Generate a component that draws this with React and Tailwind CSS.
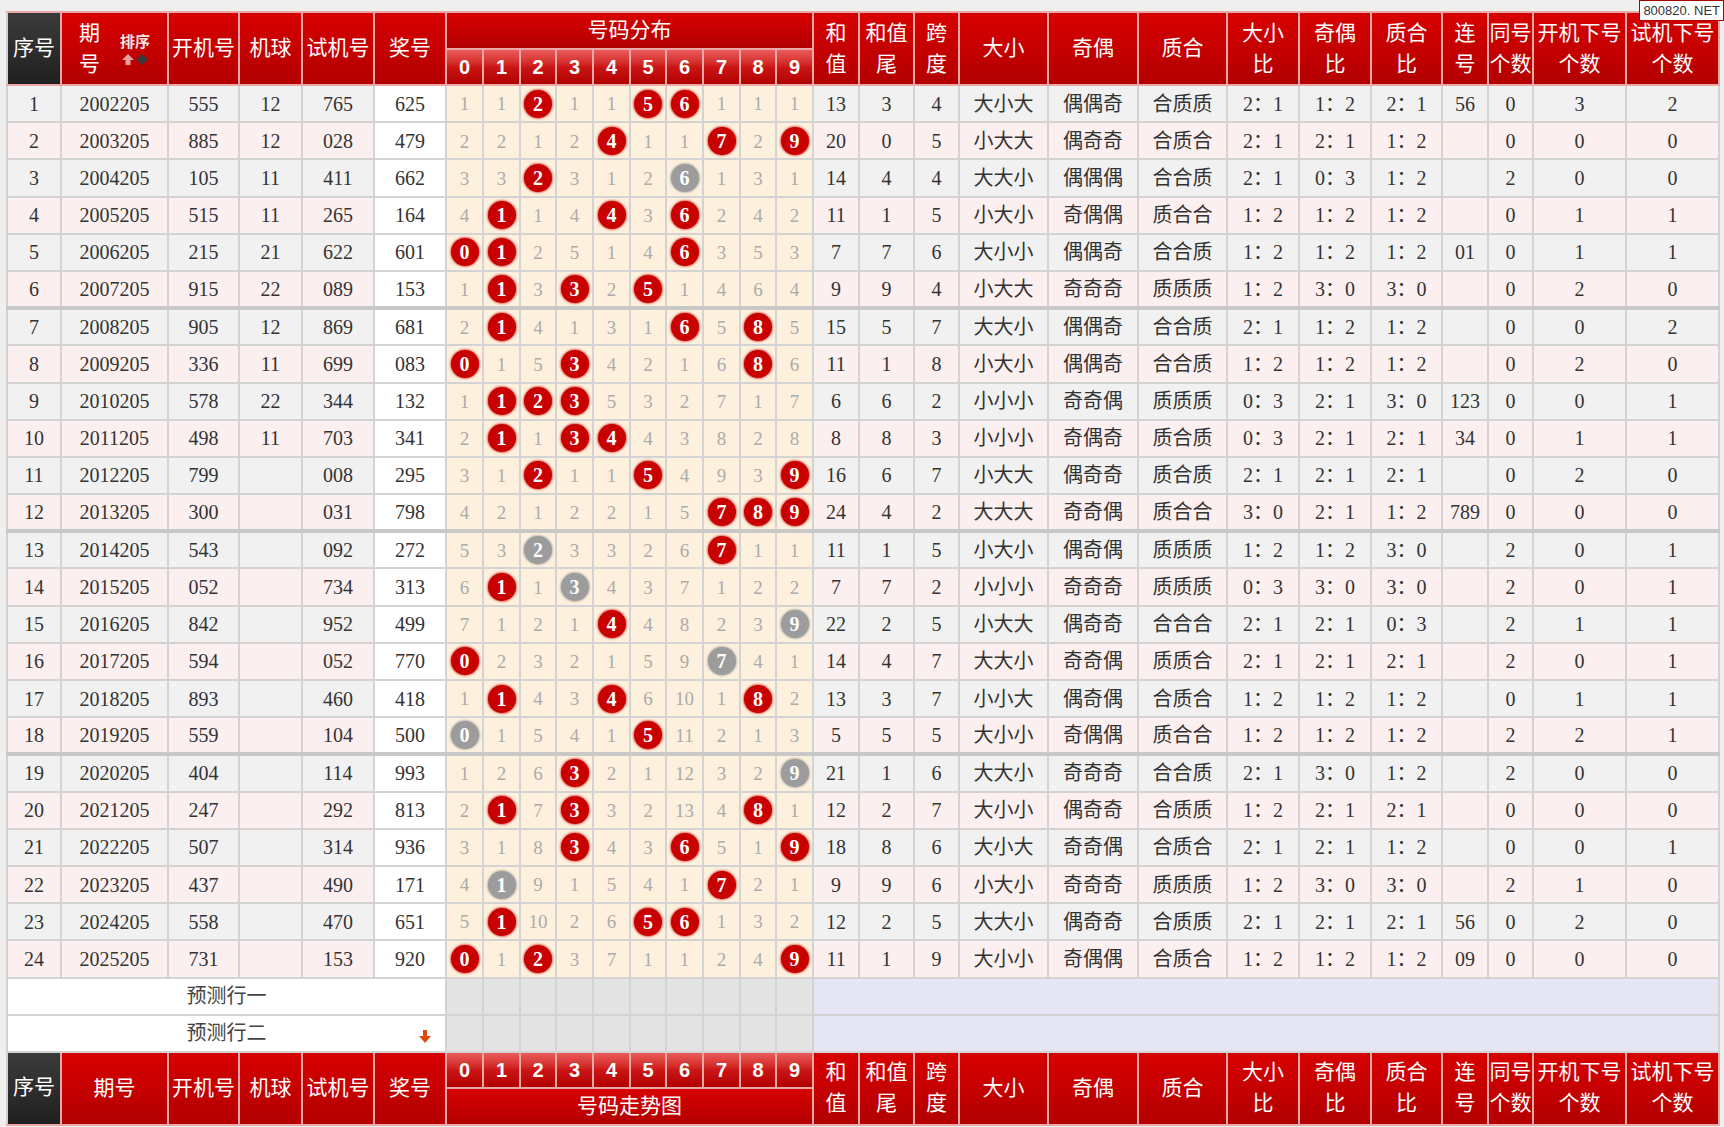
import React from 'react'

const rows = [
  [1, '2002205', '555', '12', '765', '625', '1 1 R 1 1 R R 1 1 1', ['13', '3', '4', '大小大', '偶偶奇', '合质质', '2：1', '1：2', '2：1', '56', '0', '3', '2']],
  [2, '2003205', '885', '12', '028', '479', '2 2 1 2 R 1 1 R 2 R', ['20', '0', '5', '小大大', '偶奇奇', '合质合', '2：1', '2：1', '1：2', '', '0', '0', '0']],
  [3, '2004205', '105', '11', '411', '662', '3 3 R 3 1 2 G 1 3 1', ['14', '4', '4', '大大小', '偶偶偶', '合合质', '2：1', '0：3', '1：2', '', '2', '0', '0']],
  [4, '2005205', '515', '11', '265', '164', '4 R 1 4 R 3 R 2 4 2', ['11', '1', '5', '小大小', '奇偶偶', '质合合', '1：2', '1：2', '1：2', '', '0', '1', '1']],
  [5, '2006205', '215', '21', '622', '601', 'R R 2 5 1 4 R 3 5 3', ['7', '7', '6', '大小小', '偶偶奇', '合合质', '1：2', '1：2', '1：2', '01', '0', '1', '1']],
  [6, '2007205', '915', '22', '089', '153', '1 R 3 R 2 R 1 4 6 4', ['9', '9', '4', '小大大', '奇奇奇', '质质质', '1：2', '3：0', '3：0', '', '0', '2', '0']],
  [7, '2008205', '905', '12', '869', '681', '2 R 4 1 3 1 R 5 R 5', ['15', '5', '7', '大大小', '偶偶奇', '合合质', '2：1', '1：2', '1：2', '', '0', '0', '2']],
  [8, '2009205', '336', '11', '699', '083', 'R 1 5 R 4 2 1 6 R 6', ['11', '1', '8', '小大小', '偶偶奇', '合合质', '1：2', '1：2', '1：2', '', '0', '2', '0']],
  [9, '2010205', '578', '22', '344', '132', '1 R R R 5 3 2 7 1 7', ['6', '6', '2', '小小小', '奇奇偶', '质质质', '0：3', '2：1', '3：0', '123', '0', '0', '1']],
  [10, '2011205', '498', '11', '703', '341', '2 R 1 R R 4 3 8 2 8', ['8', '8', '3', '小小小', '奇偶奇', '质合质', '0：3', '2：1', '2：1', '34', '0', '1', '1']],
  [11, '2012205', '799', '', '008', '295', '3 1 R 1 1 R 4 9 3 R', ['16', '6', '7', '小大大', '偶奇奇', '质合质', '2：1', '2：1', '2：1', '', '0', '2', '0']],
  [12, '2013205', '300', '', '031', '798', '4 2 1 2 2 1 5 R R R', ['24', '4', '2', '大大大', '奇奇偶', '质合合', '3：0', '2：1', '1：2', '789', '0', '0', '0']],
  [13, '2014205', '543', '', '092', '272', '5 3 G 3 3 2 6 R 1 1', ['11', '1', '5', '小大小', '偶奇偶', '质质质', '1：2', '1：2', '3：0', '', '2', '0', '1']],
  [14, '2015205', '052', '', '734', '313', '6 R 1 G 4 3 7 1 2 2', ['7', '7', '2', '小小小', '奇奇奇', '质质质', '0：3', '3：0', '3：0', '', '2', '0', '1']],
  [15, '2016205', '842', '', '952', '499', '7 1 2 1 R 4 8 2 3 G', ['22', '2', '5', '小大大', '偶奇奇', '合合合', '2：1', '2：1', '0：3', '', '2', '1', '1']],
  [16, '2017205', '594', '', '052', '770', 'R 2 3 2 1 5 9 G 4 1', ['14', '4', '7', '大大小', '奇奇偶', '质质合', '2：1', '2：1', '2：1', '', '2', '0', '1']],
  [17, '2018205', '893', '', '460', '418', '1 R 4 3 R 6 10 1 R 2', ['13', '3', '7', '小小大', '偶奇偶', '合质合', '1：2', '1：2', '1：2', '', '0', '1', '1']],
  [18, '2019205', '559', '', '104', '500', 'G 1 5 4 1 R 11 2 1 3', ['5', '5', '5', '大小小', '奇偶偶', '质合合', '1：2', '1：2', '1：2', '', '2', '2', '1']],
  [19, '2020205', '404', '', '114', '993', '1 2 6 R 2 1 12 3 2 G', ['21', '1', '6', '大大小', '奇奇奇', '合合质', '2：1', '3：0', '1：2', '', '2', '0', '0']],
  [20, '2021205', '247', '', '292', '813', '2 R 7 R 3 2 13 4 R 1', ['12', '2', '7', '大小小', '偶奇奇', '合质质', '1：2', '2：1', '2：1', '', '0', '0', '0']],
  [21, '2022205', '507', '', '314', '936', '3 1 8 R 4 3 R 5 1 R', ['18', '8', '6', '大小大', '奇奇偶', '合质合', '2：1', '2：1', '1：2', '', '0', '0', '1']],
  [22, '2023205', '437', '', '490', '171', '4 G 9 1 5 4 1 R 2 1', ['9', '9', '6', '小大小', '奇奇奇', '质质质', '1：2', '3：0', '3：0', '', '2', '1', '0']],
  [23, '2024205', '558', '', '470', '651', '5 R 10 2 6 R R 1 3 2', ['12', '2', '5', '大大小', '偶奇奇', '合质质', '2：1', '2：1', '2：1', '56', '0', '2', '0']],
  [24, '2025205', '731', '', '153', '920', 'R 1 R 3 7 1 1 2 4 R', ['11', '1', '9', '大小小', '奇偶偶', '合质合', '1：2', '1：2', '1：2', '09', '0', '0', '0']]
]

const digits = ['0', '1', '2', '3', '4', '5', '6', '7', '8', '9']

// header cells: red, dark, and the glossy digit cells
const thRed = 'border-2 border-[#e9a9a9] p-0 font-normal text-white text-[21px] leading-[31px] bg-linear-to-b from-[#d80000] to-[#b20000]'
const thDark = 'border-2 border-[#e9a9a9] border-l-[#cfcfcf] p-0 font-normal text-white text-[21px] bg-linear-to-b from-[#3c3c3c] to-[#202020]'
const thDigit = "border-2 border-[#e9a9a9] p-0 text-white text-[20px] font-bold font-['Liberation_Sans',Arial,sans-serif] bg-linear-to-b from-[#ea5a5a] via-[#cc1515] to-[#b00000]"
const td = 'border-2 border-[#d3d3d3] p-0 text-center'
const sep = 'border-t-[4px] border-t-[#c8c8c8]'

function Ball({ n, grey }) {
  return (
    <span className={`inline-flex items-center justify-center w-[28px] h-[28px] rounded-full text-white font-bold text-[20px] leading-none ${grey ? 'bg-[#9c9c9c] shadow-[0_0_2px_1px_rgba(150,150,150,0.6)]' : 'bg-[#c80000] shadow-[0_0_2px_1px_rgba(200,0,0,0.55)]'}`}>{n}</span>
  )
}

function Two({ a, b }) {
  return (
    <div className="flex flex-col items-center leading-[31px]">
      <span>{a}</span>
      <span>{b}</span>
    </div>
  )
}

function SortIcon() {
  return (
    <svg width="28" height="11" viewBox="0 0 28 11">
      <path d="M7 0 L13 6 L9.5 6 L9.5 11 L4.5 11 L4.5 6 L1 6 Z" fill="#e7a2a2" />
      <path d="M21 11 L15 5.5 L21 0 L27 5.5 Z" fill="#3a3a3a" />
    </svg>
  )
}

function RightHeads() {
  return (
    <>
      <th rowSpan={2} className={thRed}><Two a="和" b="值" /></th>
      <th rowSpan={2} className={thRed}><Two a="和值" b="尾" /></th>
      <th rowSpan={2} className={thRed}><Two a="跨" b="度" /></th>
      <th rowSpan={2} className={thRed}>大小</th>
      <th rowSpan={2} className={thRed}>奇偶</th>
      <th rowSpan={2} className={thRed}>质合</th>
      <th rowSpan={2} className={thRed}><Two a="大小" b="比" /></th>
      <th rowSpan={2} className={thRed}><Two a="奇偶" b="比" /></th>
      <th rowSpan={2} className={thRed}><Two a="质合" b="比" /></th>
      <th rowSpan={2} className={thRed}><Two a="连" b="号" /></th>
      <th rowSpan={2} className={thRed}><Two a="同号" b="个数" /></th>
      <th rowSpan={2} className={thRed}><Two a="开机下号" b="个数" /></th>
      <th rowSpan={2} className={thRed}><Two a="试机下号" b="个数" /></th>
    </>
  )
}

function DataRow({ r, i }) {
  const [seq, period, kj, jq, sj, jh, miss, right] = r
  const even = i % 2 === 1
  const bg = even ? 'bg-[#fcefef]' : 'bg-[#f1f1f1]'
  const top = i > 0 && i % 6 === 0 ? sep : ''
  const cells = miss.split(' ')
  return (
    <tr className="h-[37.2px]">
      <td className={`${td} ${bg} ${top}`}>{seq}</td>
      <td className={`${td} ${bg} ${top}`}>{period}</td>
      <td className={`${td} ${bg} ${top}`}>{kj}</td>
      <td className={`${td} ${bg} ${top}`}>{jq}</td>
      <td className={`${td} ${bg} ${top}`}>{sj}</td>
      <td className={`${td} bg-white ${top}`}>{jh}</td>
      {cells.map((c, d) => (
        <td key={d} className={`${td} bg-[#fdf0dd] ${top}`}>
          {c === 'R' ? <Ball n={d} /> : c === 'G' ? <Ball n={d} grey /> : <span className="text-[#ababab] text-[19px]">{c}</span>}
        </td>
      ))}
      {right.map((v, k) => (
        <td key={k} className={`${td} ${bg} ${top}`}>{v}</td>
      ))}
    </tr>
  )
}

export default function App() {
  return (
    <div className="relative min-h-screen bg-[#efefef] pt-[11px] pl-[6px]">
      <div className="absolute top-0 right-0 bg-white border border-[#a80000] px-[3px] text-[13px] leading-[19px] text-[#333] font-['Liberation_Sans',Arial,sans-serif]">800820. NET</div>
      <table className="w-[1712px] table-fixed border-collapse font-['Liberation_Serif','Noto_Sans_CJK_SC',serif] text-[20px] text-[#333]">
        <colgroup>
          <col className="w-[54px]" />
          <col className="w-[107px]" />
          <col className="w-[71px]" />
          <col className="w-[63px]" />
          <col className="w-[72px]" />
          <col className="w-[72px]" />
          <col className="w-[37px]" />
          <col className="w-[37px]" />
          <col className="w-[36px]" />
          <col className="w-[37px]" />
          <col className="w-[37px]" />
          <col className="w-[36px]" />
          <col className="w-[37px]" />
          <col className="w-[37px]" />
          <col className="w-[36px]" />
          <col className="w-[37px]" />
          <col className="w-[46px]" />
          <col className="w-[55px]" />
          <col className="w-[45px]" />
          <col className="w-[89px]" />
          <col className="w-[90px]" />
          <col className="w-[89px]" />
          <col className="w-[72px]" />
          <col className="w-[72px]" />
          <col className="w-[71px]" />
          <col className="w-[46px]" />
          <col className="w-[45px]" />
          <col className="w-[93px]" />
          <col className="w-[93px]" />
        </colgroup>
        <thead>
          <tr className="h-[37px]">
            <th rowSpan={2} className={thDark}>序号</th>
            <th rowSpan={2} className={thRed}>
              <div className="flex items-center justify-center gap-[20px]">
                <Two a="期" b="号" />
                <div className="flex flex-col items-center gap-[4px] pt-[2px]">
                  <span className="text-[15px] leading-[15px] font-bold text-[#fde2e2] [text-shadow:0_0_2px_#900]">排序</span>
                  <SortIcon />
                </div>
              </div>
            </th>
            <th rowSpan={2} className={thRed}>开机号</th>
            <th rowSpan={2} className={thRed}>机球</th>
            <th rowSpan={2} className={thRed}>试机号</th>
            <th rowSpan={2} className={thRed}>奖号</th>
            <th colSpan={10} className={`${thRed} font-bold from-[#d00000] to-[#a80000]`}>号码分布</th>
            <RightHeads />
          </tr>
          <tr className="h-[36px]">
            {digits.map((d) => <th key={d} className={thDigit}>{d}</th>)}
          </tr>
        </thead>
        <tbody>
          {rows.map((r, i) => <DataRow key={i} r={r} i={i} />)}
          <tr className="h-[37px]">
            <td colSpan={6} className={`${td} bg-white text-[#444]`}>预测行一</td>
            {digits.map((d) => <td key={d} className={`${td} bg-[#e3e3e3]`} />)}
            <td colSpan={13} className={`${td} bg-[#e5e5f4]`} />
          </tr>
          <tr className="h-[37px]">
            <td colSpan={6} className={`${td} bg-white text-[#444]`}>
              <div className="relative">
                预测行二
                <svg className="absolute right-[14px] top-[12px]" width="12" height="13" viewBox="0 0 12 13">
                  <path d="M4 0 H8 V6 H12 L6 13 L0 6 H4 Z" fill="#e04a10" />
                </svg>
              </div>
            </td>
            {digits.map((d) => <td key={d} className={`${td} bg-[#e3e3e3]`} />)}
            <td colSpan={13} className={`${td} bg-[#e5e5f4]`} />
          </tr>
        </tbody>
        <tfoot>
          <tr className="h-[36px]">
            <th rowSpan={2} className={thDark}>序号</th>
            <th rowSpan={2} className={thRed}>期号</th>
            <th rowSpan={2} className={thRed}>开机号</th>
            <th rowSpan={2} className={thRed}>机球</th>
            <th rowSpan={2} className={thRed}>试机号</th>
            <th rowSpan={2} className={thRed}>奖号</th>
            {digits.map((d) => <th key={d} className={thDigit}>{d}</th>)}
            <RightHeads />
          </tr>
          <tr className="h-[37px]">
            <th colSpan={10} className={`${thRed} font-bold from-[#d00000] to-[#a80000]`}>号码走势图</th>
          </tr>
        </tfoot>
      </table>
    </div>
  )
}
